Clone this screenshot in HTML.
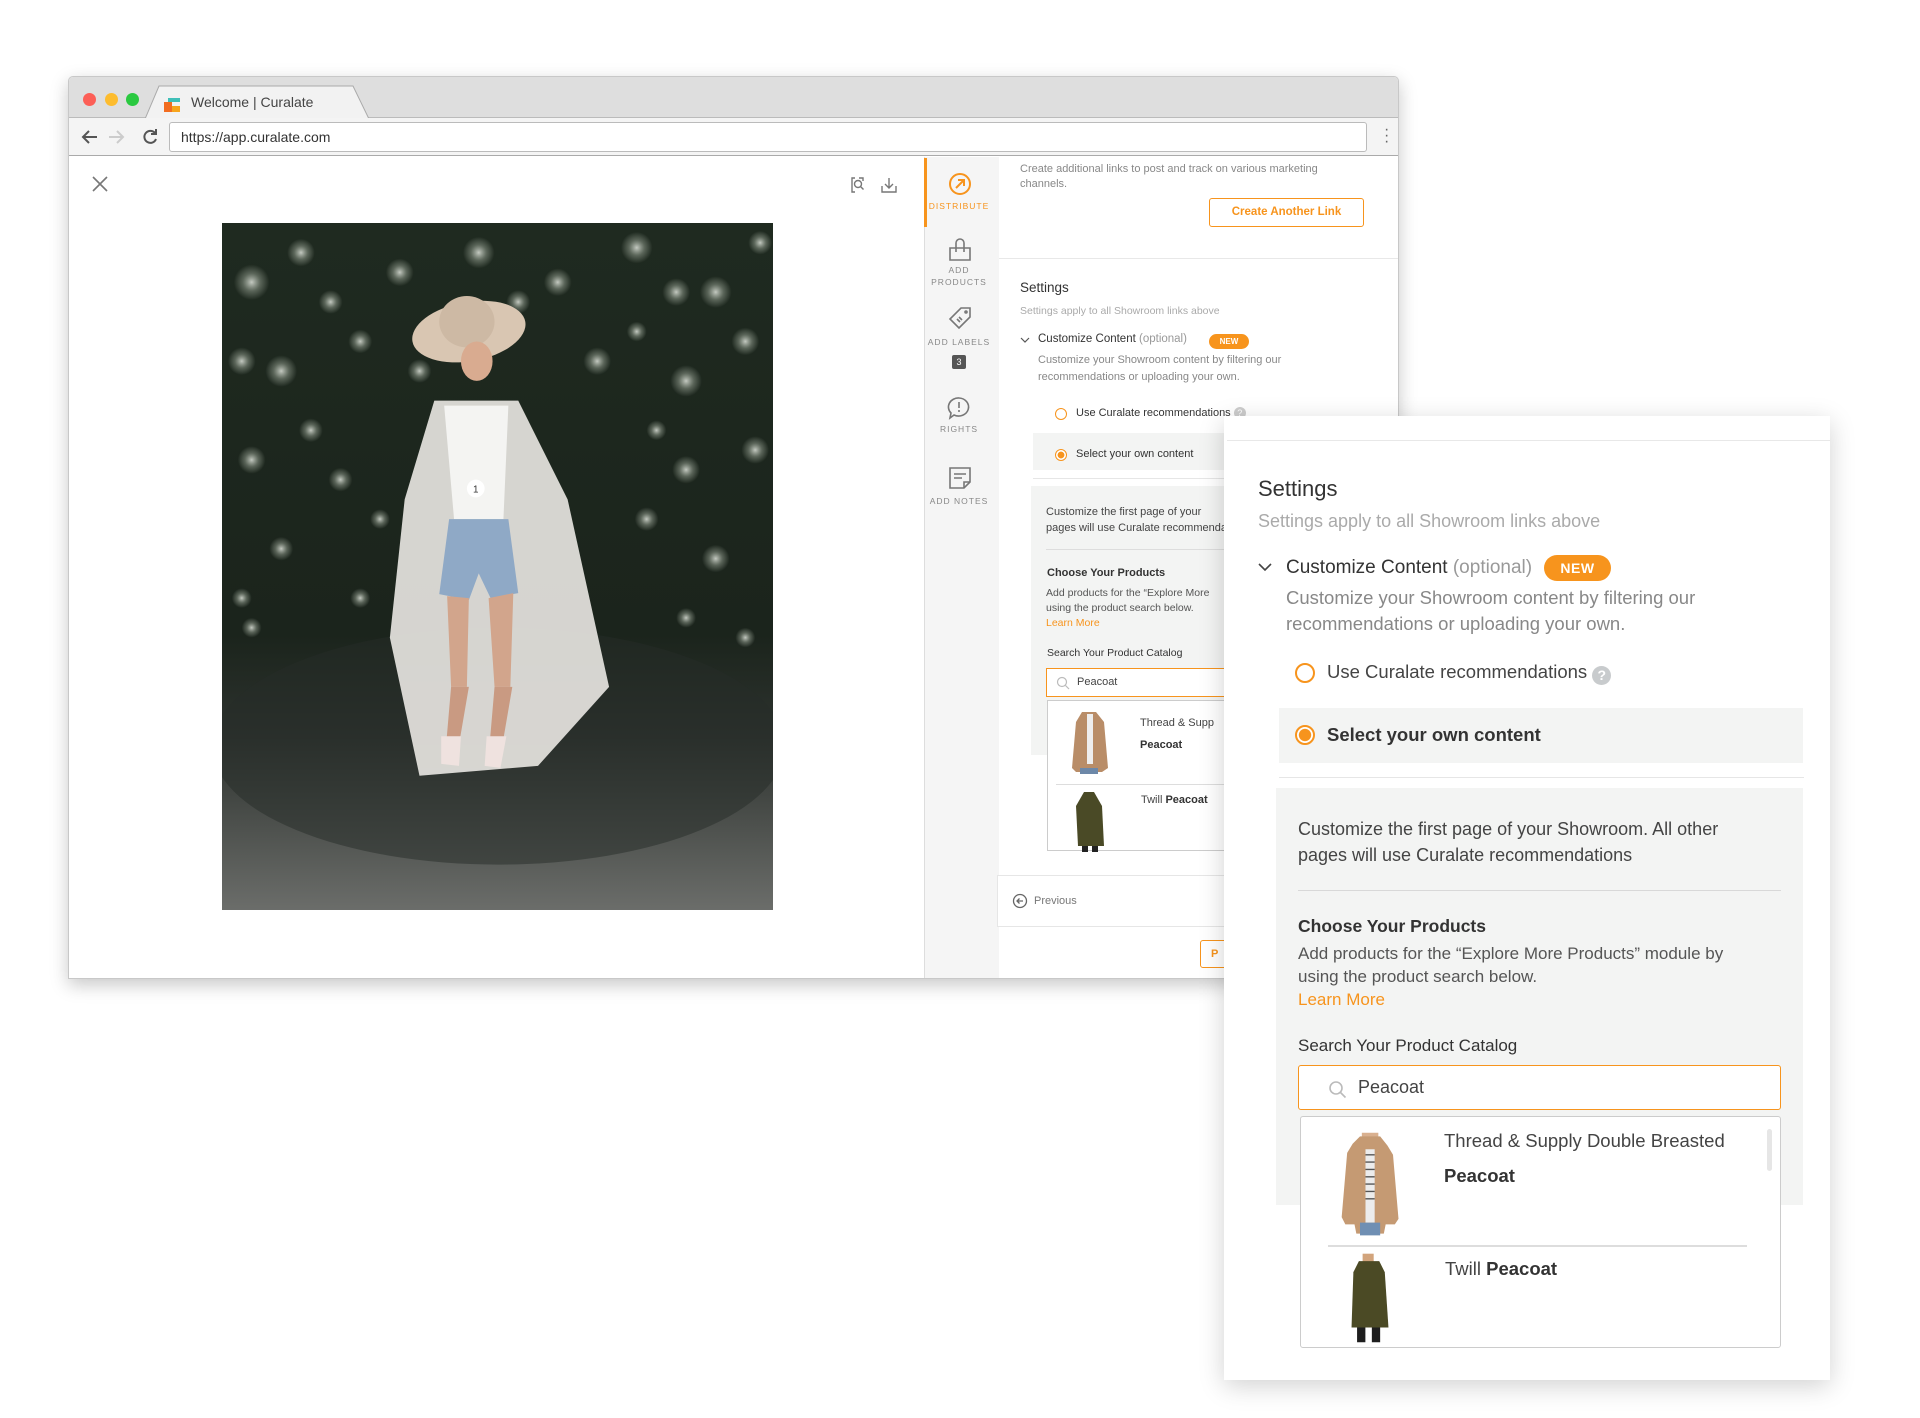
<!DOCTYPE html>
<html><head><meta charset="utf-8"><style>
*{margin:0;padding:0;box-sizing:border-box}
body{width:1920px;height:1418px;background:#fff;position:relative;overflow:hidden;font-family:"Liberation Sans",sans-serif;color:#333}
.a{position:absolute}
.win{left:68px;top:76px;width:1331px;height:903px;border:1px solid #c8c8c8;border-radius:5px 5px 0 0;box-shadow:0 6px 18px rgba(0,0,0,.22);background:#fff;overflow:hidden}
.sm{font-size:11px;color:#888}
.lbl{font-size:8.5px;letter-spacing:1px;color:#888;text-align:center;width:72px;left:923px;line-height:12px}
</style></head><body>

<div class="a win">
  <div class="a" style="left:0;top:0;width:1337px;height:41px;background:#dedede;border-bottom:1px solid #bbb"></div>
  <div class="a" style="left:14px;top:16px;width:13px;height:13px;border-radius:50%;background:#fc5f57"></div>
  <div class="a" style="left:36px;top:16px;width:13px;height:13px;border-radius:50%;background:#fdbc2e"></div>
  <div class="a" style="left:57px;top:16px;width:13px;height:13px;border-radius:50%;background:#2ac940"></div>
  <svg class="a" style="left:76px;top:8px" width="240" height="34"><path d="M0 34 L14 1 L208 1 L224 34 Z" fill="#f2f2f2" stroke="#aaa"/><rect x="14" y="33" width="196" height="2" fill="#f2f2f2"/></svg>
  <svg class="a" style="left:95px;top:17px" width="18" height="18"><path d="M4 4h12v4H8v4H4z" fill="#3fbfb8"/><path d="M0 8h8v10H0z" fill="#f26d21"/><path d="M8 12h8v6H8z" fill="#f7a51c"/></svg>
  <div class="a" style="left:122px;top:17px;font-size:14px;color:#444">Welcome | Curalate</div>
  <div class="a" style="left:0;top:41px;width:1337px;height:38px;background:#f4f4f4;border-bottom:1px solid #aaa"></div>
  <svg class="a" style="left:12px;top:51px" width="80" height="18" fill="none" stroke-width="2"><path d="M16 9H3M8 3L2 9l6 6" stroke="#555"/><path d="M28 9h13M36 3l6 6-6 6" stroke="#ccc"/><path d="M74 5a6 6 0 1 0 1 6" stroke="#555"/><path d="M75 1v5h-5" stroke="#555"/></svg>
  <div class="a" style="left:100px;top:45px;width:1198px;height:30px;background:#fff;border:1px solid #bbb;border-radius:3px;font-size:14px;color:#333;padding:6px 11px">https://app.curalate.com</div>
  <div class="a" style="left:1315px;top:50px;font-size:16px;color:#666;line-height:6px">·<br>·<br>·</div>
  <svg class="a" style="left:22px;top:98px" width="18" height="18" stroke="#777" stroke-width="1.6"><path d="M2 2L16 16M16 2L2 16"/></svg>
  <svg class="a" style="left:781px;top:99px" width="50" height="18" fill="none" stroke="#777" stroke-width="1.4"><path d="M5 2H2v14h3"/><path d="M9 2h4v3"/><circle cx="8" cy="8" r="3.5"/><path d="M10.5 10.5l3 3"/><path d="M32 10v6h14v-6M39 2v10M35 8l4 4 4-4"/></svg>
  <svg class="a" style="left:153px;top:146px" width="551" height="687" viewBox="0 0 558 696" preserveAspectRatio="none">
    <defs><linearGradient id="g" x1="0" y1="0" x2="0" y2="1"><stop offset="0" stop-color="#1f2a20"/><stop offset=".6" stop-color="#1b241c"/><stop offset=".75" stop-color="#2e332f"/><stop offset="1" stop-color="#6b6d6a"/></linearGradient>
    <radialGradient id="f"><stop offset="0" stop-color="#eef2ea" stop-opacity=".8"/><stop offset=".5" stop-color="#c8d2c2" stop-opacity=".35"/><stop offset="1" stop-color="#c8d2c2" stop-opacity="0"/></radialGradient></defs>
    <rect width="558" height="696" fill="url(#g)"/>
    <g fill="url(#f)">
      <circle cx="30" cy="60" r="18"/><circle cx="80" cy="30" r="14"/><circle cx="110" cy="80" r="12"/><circle cx="180" cy="50" r="14"/><circle cx="260" cy="30" r="16"/><circle cx="300" cy="80" r="12"/><circle cx="340" cy="60" r="14"/><circle cx="420" cy="25" r="16"/><circle cx="460" cy="70" r="14"/><circle cx="500" cy="70" r="16"/><circle cx="545" cy="20" r="12"/>
      <circle cx="20" cy="140" r="14"/><circle cx="60" cy="150" r="16"/><circle cx="140" cy="120" r="12"/><circle cx="200" cy="150" r="12"/><circle cx="380" cy="140" r="14"/><circle cx="420" cy="110" r="10"/><circle cx="470" cy="160" r="16"/><circle cx="530" cy="120" r="14"/>
      <circle cx="30" cy="240" r="14"/><circle cx="90" cy="210" r="12"/><circle cx="120" cy="260" r="12"/><circle cx="440" cy="210" r="10"/><circle cx="470" cy="250" r="14"/><circle cx="540" cy="230" r="14"/>
      <circle cx="60" cy="330" r="12"/><circle cx="160" cy="300" r="10"/><circle cx="500" cy="340" r="14"/><circle cx="430" cy="300" r="12"/><circle cx="20" cy="380" r="10"/>
      <circle cx="30" cy="410" r="10"/><circle cx="530" cy="420" r="10"/><circle cx="140" cy="380" r="10"/><circle cx="470" cy="400" r="10"/>
    </g>
    <ellipse cx="280" cy="530" rx="290" ry="120" fill="#262b27" opacity=".5"/>
    <ellipse cx="250" cy="110" rx="58" ry="30" fill="#d9c6b2" transform="rotate(-10 250 110)"/>
    <ellipse cx="248" cy="100" rx="28" ry="26" fill="#cdb9a4"/>
    <ellipse cx="258" cy="140" rx="16" ry="20" fill="#d9ab90"/>
    <path d="M215 180 L300 180 L350 280 L392 470 L320 550 L200 560 L170 420 L185 280 Z" fill="#e6e4e0" opacity=".92"/>
    <path d="M225 185 L290 185 L285 300 L235 300 Z" fill="#f4f4f2"/>
    <path d="M230 300 L290 300 L300 375 L272 380 L260 355 L250 382 L220 376 Z" fill="#8fa9c6"/>
    <path d="M228 378 L250 380 L248 470 L232 470 Z M270 380 L295 375 L292 470 L276 470 Z" fill="#d2a58c"/>
    <path d="M232 470 L250 470 L238 540 L226 540 Z M276 470 L294 470 L282 540 L270 540 Z" fill="#c99a82"/>
    <path d="M222 520 L242 520 L240 550 L222 548 Z M268 520 L288 520 L282 552 L266 550 Z" fill="#efe2df"/>
    <circle cx="257" cy="269" r="9" fill="#fff"/><text x="257" y="273" font-size="10" text-anchor="middle" fill="#333" font-family="Liberation Sans">1</text>
  </svg>
  <div class="a" style="left:855px;top:80px;width:75px;height:823px;background:#f5f5f5;border-left:1px solid #ddd"></div>
  <div class="a" style="left:855px;top:81px;width:3px;height:69px;background:#f7941d"></div>
  <div class="a" style="left:930px;top:80px;width:405px;height:823px;background:#fff"></div>
  <div class="a" style="left:930px;top:181px;width:405px;height:1px;background:#e8e8e8"></div>
</div>

<svg class="a" style="left:948px;top:172px" width="24" height="24" fill="none" stroke="#f7941d" stroke-width="2"><circle cx="12" cy="12" r="10"/><path d="M8 16l8-8M10 8h6v6"/></svg>
<div class="a lbl" style="top:200px;color:#f7941d">DISTRIBUTE</div>
<svg class="a" style="left:948px;top:238px" width="24" height="24" fill="none" stroke="#777" stroke-width="1.6"><path d="M2 10h20v12H2z"/><path d="M8 14V5a4 4 0 0 1 8 0v9"/></svg>
<div class="a lbl" style="top:264px">ADD<br>PRODUCTS</div>
<svg class="a" style="left:948px;top:306px" width="24" height="24" fill="none" stroke="#777" stroke-width="1.6"><path d="M13 2h9v9L11 22 2 13z"/><circle cx="18" cy="6" r="1"/><path d="M9 13l3 3M11 11l3 3"/></svg>
<div class="a lbl" style="top:336px">ADD LABELS</div>
<div class="a" style="left:952px;top:355px;width:14px;height:14px;background:#555;border-radius:2px;color:#fff;font-size:9px;text-align:center;line-height:14px">3</div>
<svg class="a" style="left:947px;top:396px" width="24" height="24" fill="none" stroke="#777" stroke-width="1.6"><path d="M12 2a10 9 0 1 1-5 17l-4 3 1-5A10 9 0 0 1 12 2z"/><path d="M12 6v6M12 14v2"/></svg>
<div class="a lbl" style="top:423px">RIGHTS</div>
<svg class="a" style="left:948px;top:466px" width="24" height="24" fill="none" stroke="#777" stroke-width="1.6"><path d="M2 2h20v14l-6 6H2z"/><path d="M6 8h12M6 12h8M16 22v-6h6"/></svg>
<div class="a lbl" style="top:495px">ADD NOTES</div>

<div class="a sm" style="left:1020px;top:162px;line-height:15px;width:310px">Create additional links to post and track on various marketing channels.</div>
<div class="a" style="left:1209px;top:198px;width:155px;height:29px;border:1px solid #f7941d;border-radius:3px;color:#f7941d;font-size:11.5px;font-weight:bold;text-align:center;line-height:27px">Create Another Link</div>
<div class="a" style="left:1020px;top:280px;font-size:13.5px;color:#333">Settings</div>
<div class="a sm" style="left:1020px;top:305px;color:#aaa;font-size:10.5px">Settings apply to all Showroom links above</div>
<svg class="a" style="left:1020px;top:336px" width="10" height="8" fill="none" stroke="#555" stroke-width="1.2"><path d="M1 2l4 4 4-4"/></svg>
<div class="a" style="left:1038px;top:333px;font-size:11.5px;color:#333">Customize Content <span style="color:#999">(optional)</span></div>
<div class="a" style="left:1209px;top:334px;width:40px;height:15px;background:#f7941d;border-radius:8px;color:#fff;font-size:8px;font-weight:bold;text-align:center;line-height:15px">NEW</div>
<div class="a sm" style="left:1038px;top:352px;line-height:17px;width:300px">Customize your Showroom content by filtering our recommendations or uploading your own.</div>
<div class="a" style="left:1055px;top:408px;width:12px;height:12px;border:1.5px solid #f7941d;border-radius:50%"></div>
<div class="a" style="left:1076px;top:407px;font-size:11px;color:#333">Use Curalate recommendations <span style="display:inline-block;width:12px;height:12px;border-radius:50%;background:#ccc;color:#fff;font-size:9px;text-align:center;line-height:12px">?</span></div>
<div class="a" style="left:1033px;top:433px;width:200px;height:37px;background:#f3f4f3"></div>
<div class="a" style="left:1055px;top:449px;width:12px;height:12px;border:1.5px solid #f7941d;border-radius:50%;background:radial-gradient(#f7941d 45%,#fff 50%)"></div>
<div class="a" style="left:1076px;top:448px;font-size:11px;color:#333">Select your own content</div>
<div class="a" style="left:1033px;top:478px;width:200px;height:1px;background:#e6e6e6"></div>
<div class="a" style="left:1031px;top:486px;width:200px;height:269px;background:#f3f4f3"></div>
<div class="a" style="left:1046px;top:504px;font-size:11px;color:#444;line-height:16px;white-space:nowrap;width:180px;overflow:hidden">Customize the first page of your<br>pages will use Curalate recommendations</div>
<div class="a" style="left:1046px;top:549px;width:190px;height:1px;background:#ddd"></div>
<div class="a" style="left:1047px;top:567px;font-size:11px;font-weight:bold;color:#333">Choose Your Products</div>
<div class="a" style="left:1046px;top:586px;font-size:10.5px;color:#555;line-height:15px;white-space:nowrap;width:190px;overflow:hidden">Add products for the “Explore More<br>using the product search below.<br><span style="color:#f7941d">Learn More</span></div>
<div class="a" style="left:1047px;top:647px;font-size:10.5px;color:#333">Search Your Product Catalog</div>
<div class="a" style="left:1046px;top:668px;width:190px;height:29px;border:1px solid #f7941d;background:#fff;font-size:11px;color:#444;padding:7px 0 0 30px">Peacoat</div>
<svg class="a" style="left:1056px;top:676px" width="14" height="14" fill="none" stroke="#bbb" stroke-width="1.2"><circle cx="6" cy="6" r="4.5"/><path d="M9.5 9.5l3.5 3.5"/></svg>
<div class="a" style="left:1047px;top:700px;width:190px;height:151px;border:1px solid #ccc;background:#fff"></div>
<div class="a" style="left:1140px;top:712px;font-size:11px;color:#444;line-height:22px;white-space:nowrap">Thread &amp; Supp<br><b style="color:#333">Peacoat</b></div>
<div class="a" style="left:1056px;top:784px;width:180px;height:1px;background:#ddd"></div>
<div class="a" style="left:1141px;top:794px;font-size:11px;color:#444">Twill <b style="color:#333">Peacoat</b></div>
<svg class="a" style="left:1070px;top:708px" width="40" height="68"><path d="M12 4h14l8 10 4 46-6 4H6L2 60 6 14z" fill="#b98d68"/><path d="M17 6h6v50h-6z" fill="#eee"/><path d="M10 60h18v6H10z" fill="#6d88a8"/></svg>
<svg class="a" style="left:1074px;top:790px" width="32" height="62"><path d="M10 2h10l8 14 2 40H4L2 16z" fill="#4a4a26"/><path d="M8 56h6v6H8zM18 56h6v6h-6z" fill="#222"/></svg>
<div class="a" style="left:997px;top:875px;width:240px;height:52px;border:1px solid #e6e6e6;background:#fff"></div>
<svg class="a" style="left:1012px;top:893px" width="16" height="16" fill="none" stroke="#666" stroke-width="1.3"><circle cx="8" cy="8" r="6.5"/><path d="M11 8H5M7.5 5.5L5 8l2.5 2.5"/></svg>
<div class="a" style="left:1034px;top:895px;font-size:11px;color:#777">Previous</div>
<div class="a" style="left:1200px;top:940px;width:40px;height:28px;border:1px solid #f7941d;border-radius:3px;color:#f7941d;font-size:11px;font-weight:bold;padding:7px 0 0 10px">P</div>

<div class="a" style="left:1224px;top:416px;width:606px;height:964px;background:#fff;box-shadow:0 6px 24px rgba(0,0,0,.18)">
  <div class="a" style="left:3px;top:24px;width:603px;height:1px;background:#e8e8e8"></div>
</div>
<div class="a" style="left:1258px;top:476px;font-size:22px;color:#333">Settings</div>
<div class="a" style="left:1258px;top:511px;font-size:18px;color:#aaa">Settings apply to all Showroom links above</div>
<svg class="a" style="left:1258px;top:562px" width="14" height="10" fill="none" stroke="#444" stroke-width="1.6"><path d="M1 2l6 6 6-6"/></svg>
<div class="a" style="left:1286px;top:557px;font-size:19px;color:#333">Customize Content <span style="color:#999">(optional)</span></div>
<div class="a" style="left:1544px;top:555px;width:67px;height:26px;background:#f7941d;border-radius:13px;color:#fff;font-size:14px;font-weight:bold;text-align:center;line-height:26px;letter-spacing:.5px">NEW</div>
<div class="a" style="left:1286px;top:585px;font-size:18.5px;color:#888;line-height:26px;width:500px">Customize your Showroom content by filtering our recommendations or uploading your own.</div>
<div class="a" style="left:1295px;top:663px;width:20px;height:20px;border:2px solid #f7941d;border-radius:50%"></div>
<div class="a" style="left:1327px;top:661px;font-size:18.5px;color:#444">Use Curalate recommendations <span style="display:inline-block;width:19px;height:19px;border-radius:50%;background:#c8cbcd;color:#fff;font-size:14px;font-weight:bold;text-align:center;line-height:19px;vertical-align:-2px">?</span></div>
<div class="a" style="left:1279px;top:708px;width:524px;height:55px;background:#f3f4f3"></div>
<div class="a" style="left:1295px;top:725px;width:20px;height:20px;border:2px solid #f7941d;border-radius:50%;background:radial-gradient(#f7941d 52%,#fff 57%)"></div>
<div class="a" style="left:1327px;top:724px;font-size:18.5px;color:#333;font-weight:bold">Select your own content</div>
<div class="a" style="left:1279px;top:777px;width:525px;height:1px;background:#e6e6e6"></div>
<div class="a" style="left:1276px;top:788px;width:527px;height:417px;background:#f3f4f3"></div>
<div class="a" style="left:1298px;top:816px;font-size:18px;color:#444;line-height:26px;width:460px">Customize the first page of your Showroom. All other pages will use Curalate recommendations</div>
<div class="a" style="left:1298px;top:890px;width:483px;height:1px;background:#d8d8d8"></div>
<div class="a" style="left:1298px;top:916px;font-size:17.5px;font-weight:bold;color:#333">Choose Your Products</div>
<div class="a" style="left:1298px;top:942px;font-size:17px;color:#555;line-height:23px;width:460px">Add products for the “Explore More Products” module by using the product search below.<br><span style="color:#f7941d">Learn More</span></div>
<div class="a" style="left:1298px;top:1036px;font-size:17px;color:#333">Search Your Product Catalog</div>
<div class="a" style="left:1298px;top:1065px;width:483px;height:45px;border:1.5px solid #f7941d;border-radius:3px;background:#fff"></div>
<svg class="a" style="left:1328px;top:1080px" width="20" height="20" fill="none" stroke="#bbb" stroke-width="1.6"><circle cx="8" cy="8" r="6"/><path d="M12.5 12.5l5 5"/></svg>
<div class="a" style="left:1358px;top:1077px;font-size:18px;color:#444">Peacoat</div>
<div class="a" style="left:1300px;top:1116px;width:481px;height:232px;border:1px solid #ccc;border-radius:3px;background:#fff"></div>
<div class="a" style="left:1767px;top:1129px;width:5px;height:42px;border-radius:3px;background:#e6e6e6"></div>
<div class="a" style="left:1444px;top:1130px;font-size:18.5px;color:#444">Thread &amp; Supply Double Breasted</div>
<div class="a" style="left:1444px;top:1165px;font-size:18.5px;font-weight:bold;color:#333">Peacoat</div>
<div class="a" style="left:1328px;top:1245px;width:419px;height:2px;background:#ddd"></div>
<div class="a" style="left:1445px;top:1258px;font-size:18.5px;color:#444">Twill <b style="color:#333">Peacoat</b></div>
<svg class="a" style="left:1338px;top:1130px" width="66" height="110" viewBox="0 0 72 114"><path d="M26 0h18v8H26z" fill="#d9b08f"/><path d="M24 4h22l8 10 6 10 6 70-4 6H52l-2 10H20l-2-10H8L4 92 10 22l6-10z" fill="#c59a73"/><path d="M30 18h10v80H30z" fill="#ececec"/><path d="M30 24h10M30 32h10M30 40h10M30 48h10M30 56h10M30 64h10M30 72h10" stroke="#555" stroke-width="1.5"/><path d="M24 98h22v14H24z" fill="#6f8fb3"/></svg>
<svg class="a" style="left:1346px;top:1250px" width="48" height="96" viewBox="0 0 52 96"><path d="M18 0h12v10H18z" fill="#d2a47c"/><path d="M14 8h22l6 12 4 60H6L8 20z" fill="#4b4a25"/><path d="M12 80h9v16h-9zM28 80h9v16h-9z" fill="#1e1e1e"/></svg>
</body></html>
